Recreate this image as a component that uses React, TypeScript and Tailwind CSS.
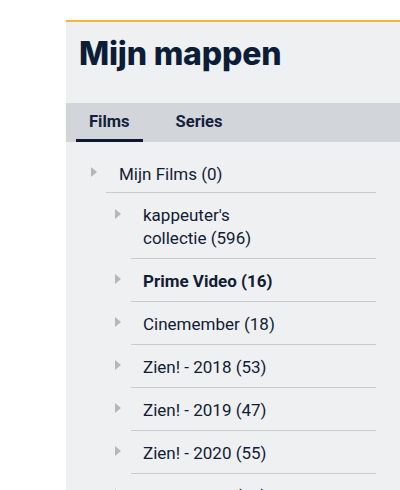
import React from "react";

const Tri = ({ top }: { top: number }) => (
  <svg width="6" height="10" viewBox="0 0 6 10" className="shrink-0" style={{ marginTop: top }}>
    <polygon points="0,0 6,5 0,10" fill="#b5b7ba" />
  </svg>
);

const children: { label: React.ReactNode; key: string; bold?: boolean }[] = [
  { key: "k", label: <>kappeuter's<br />collectie (596)</> },
  { key: "p", label: "Prime Video (16)", bold: true },
  { key: "c", label: "Cinemember (18)" },
  { key: "z18", label: "Zien! - 2018 (53)" },
  { key: "z19", label: "Zien! - 2019 (47)" },
  { key: "z20", label: "Zien! - 2020 (55)" },
  { key: "z21", label: "Zien! - 2021 (61)" },
];

export default function App() {
  return (
    <div className="w-[400px] h-[490px] overflow-hidden bg-white pt-[20px] pl-[66px]" style={{ fontFamily: "Roboto, 'Liberation Sans', sans-serif" }}>
      <div className="h-[480px] border-t-2 border-[#f1b83a] bg-[#eff0f2]">
        <div className="h-[81px] pl-[13px] pt-[8px]">
          <h1 className="text-[32px] font-extrabold text-[#0c1d38] leading-[48px] tracking-[-0.2px]" style={{ fontFamily: "Inter, 'Noto Sans', sans-serif" }}>
            Mijn mappen
          </h1>
        </div>
        <div className="h-[39px] bg-[#d2d5da] flex pl-[10px] gap-[20px]">
          <div className="px-[13px] flex items-center border-b-[3px] border-[#0e1a33] pt-[3px] text-[16.5px] font-bold text-[#14213d]">Films</div>
          <div className="px-[13px] flex items-center border-b-[3px] border-transparent pt-[3px] text-[16.5px] font-bold text-[#14213d]">Series</div>
        </div>
        <div className="pt-[9px] pr-[24px] text-[17px] leading-[22.4px] text-[#111c35]">
          <div className="flex items-start pl-[25px]">
            <Tri top={16} />
            <div className="ml-[9px] flex-1 border-b border-[#c9cbcf] pl-[13px] pt-[12px] pb-[7px]">
              Mijn Films (0)
            </div>
          </div>
          <div className="pl-[49px]">
            {children.map((c) => (
              <div key={c.key} className="flex items-start">
                <Tri top={15.5} />
                <div className={"ml-[10px] flex-1 border-b border-[#c9cbcf] pl-[12px] pt-[11px] pb-[8.6px] " + (c.bold ? "font-bold" : "")}>
                  {c.label}
                </div>
              </div>
            ))}
          </div>
        </div>
      </div>
    </div>
  );
}
